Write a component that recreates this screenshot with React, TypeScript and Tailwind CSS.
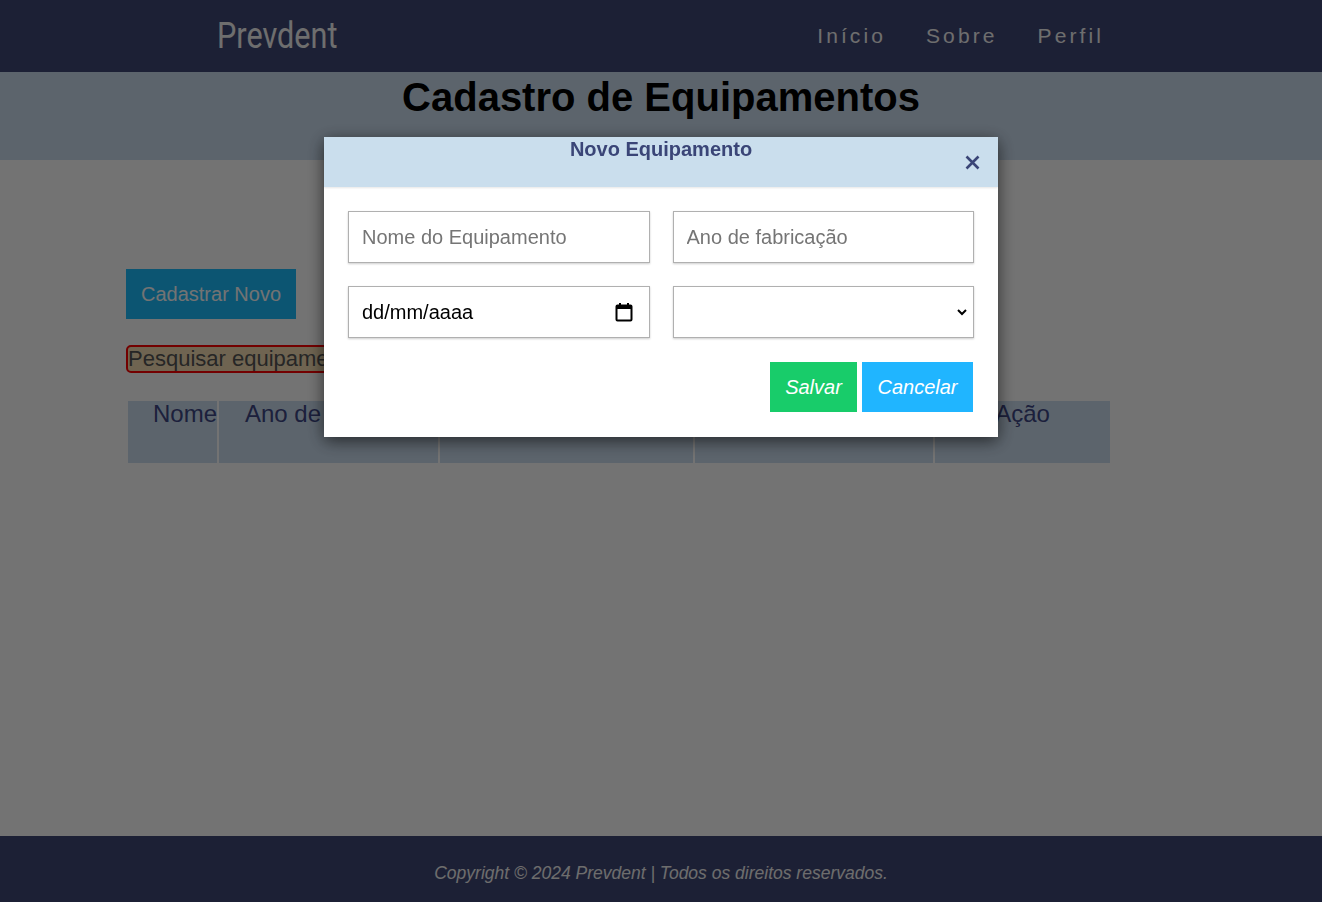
import React from 'react';

const App: React.FC = () => {
    return (
        <div className="min-h-screen flex flex-col bg-white font-['Liberation_Sans',Arial,sans-serif]">
            {/* Navbar */}
            <nav className="h-[72px] bg-[#3e4776] flex items-center justify-between pl-[217px] pr-[218px]">
                <span className="font-['Roboto',sans-serif] text-[36px] scale-x-[0.85] origin-left text-[#f4f4f4] leading-none">Prevdent</span>
                <div className="flex items-center gap-[40px] text-[21px] tracking-[3.1px] text-[#f4f4f4]">
                    <a href="#">Início</a>
                    <a href="#">Sobre</a>
                    <a href="#">Perfil</a>
                </div>
            </nav>

            {/* Title band */}
            <div className="h-[88px] bg-[#ccdef0] flex justify-center">
                <h1 className="text-[40px] font-bold text-black leading-[46px] mt-[2px]">Cadastro de Equipamentos</h1>
            </div>

            {/* Main */}
            <main className="flex-1 px-[126px] pt-[109px]">
                <button className="h-[50px] px-[15px] bg-[#1bbdfd] text-white text-[20px]">Cadastrar Novo</button>
                <div className="mt-[26px]">
                    <input
                        placeholder="Pesquisar equipamento"
                        className="w-[300px] h-[28px] border-2 border-[#ff0000] rounded-[5px] bg-[#f5deb3] text-[22px] leading-none placeholder:text-[#555]"
                    />
                </div>
                <table className="mt-[26px] w-[985px] table-fixed border-separate border-spacing-[2px] text-[24px] leading-[26px] text-[#3e4785]">
                    <thead>
                        <tr className="h-[62px]">
                            <th className="w-[89px] bg-[#ccdef0] font-normal text-left align-top pl-[25px] whitespace-nowrap">Nome</th>
                            <th className="w-[219px] bg-[#ccdef0] font-normal text-left align-top pl-[26px] whitespace-nowrap overflow-hidden">Ano de fabricação</th>
                            <th className="w-[253px] bg-[#ccdef0] font-normal align-top whitespace-nowrap overflow-hidden">Data</th>
                            <th className="w-[238px] bg-[#ccdef0] font-normal align-top whitespace-nowrap overflow-hidden">Status</th>
                            <th className="w-[175px] bg-[#ccdef0] font-normal align-top">Ação</th>
                        </tr>
                    </thead>
                </table>
            </main>

            {/* Footer */}
            <footer className="h-[66px] bg-[#3e4776] flex items-center justify-center pt-[8px]">
                <p className="text-[17.5px] italic text-[#f2f2f2]">Copyright © 2024 Prevdent | Todos os direitos reservados.</p>
            </footer>

            {/* Overlay + modal */}
            <div className="fixed inset-0 bg-black/55 flex justify-center pt-[137px]">
                <div className="w-[674px] h-[300px] bg-white shadow-[0_4px_16px_rgba(0,0,0,0.6)] flex flex-col">
                    <div className="relative h-[50px] bg-[#cadeed] flex justify-center shadow-[0_1px_2px_rgba(0,0,0,0.1)]">
                        <h2 className="text-[20px] font-bold text-[#3a4577] leading-[24px]">Novo Equipamento</h2>
                        <button className="absolute right-[18px] top-[18px] text-[#3a4577]">
                            <svg width="15" height="15" viewBox="0 0 15 15" fill="none" stroke="currentColor" strokeWidth="2.6" strokeLinecap="butt">
                                <path d="M1.5 1.5l12 12M13.5 1.5l-12 12" />
                            </svg>
                        </button>
                    </div>
                    <div className="px-[24px] pt-[24px] grid grid-cols-2 gap-x-[23px] gap-y-[23px]">
                        <input
                            placeholder="Nome do Equipamento"
                            className="h-[52px] border border-[#b0b0b0] shadow-[0_1px_2px_rgba(0,0,0,0.2)] px-[13px] text-[20px] placeholder:text-[#757575] outline-none"
                        />
                        <input
                            placeholder="Ano de fabricação"
                            className="h-[52px] border border-[#b0b0b0] shadow-[0_1px_2px_rgba(0,0,0,0.2)] px-[13px] text-[20px] placeholder:text-[#757575] outline-none"
                        />
                        <div className="relative">
                            <input
                                readOnly
                                value="dd/mm/aaaa"
                                className="w-full h-[52px] border border-[#b0b0b0] shadow-[0_1px_2px_rgba(0,0,0,0.2)] px-[13px] text-[20px] text-black outline-none"
                            />
                            <svg className="absolute right-[17px] top-[16px]" width="18" height="20" viewBox="0 0 18 20" fill="none">
                                <rect x="1.5" y="3.5" width="15" height="15" rx="1" stroke="black" strokeWidth="2" />
                                <rect x="1.5" y="3.5" width="15" height="3.5" fill="black" />
                                <path d="M5 1v3M13 1v3" stroke="black" strokeWidth="2" />
                            </svg>
                        </div>
                        <div className="relative">
                            <select className="w-full h-[52px] border border-[#b0b0b0] shadow-[0_1px_2px_rgba(0,0,0,0.2)] px-[13px] text-[20px] appearance-none bg-white outline-none">
                                <option value=""></option>
                            </select>
                            <svg className="absolute right-[6px] top-[22px] pointer-events-none" width="12" height="8" viewBox="0 0 12 8" fill="none">
                                <path d="M2 2l4 4 4-4" stroke="black" strokeWidth="2" />
                            </svg>
                        </div>
                    </div>
                    <div className="flex justify-end gap-[5px] pt-[24px] pr-[25px]">
                        <button className="w-[87px] h-[50px] bg-[#18cc6a] text-white italic text-[20px]">Salvar</button>
                        <button className="w-[111px] h-[50px] bg-[#20b5ff] text-white italic text-[20px]">Cancelar</button>
                    </div>
                </div>
            </div>
        </div>
    );
};

export default App;
